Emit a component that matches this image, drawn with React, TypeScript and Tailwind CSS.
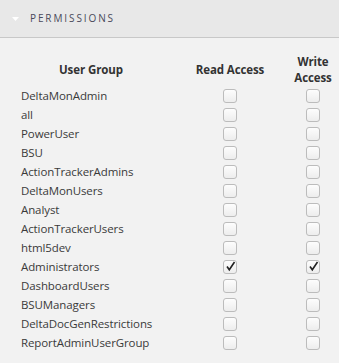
const groups = [
  { name: "DeltaMonAdmin", read: false, write: false },
  { name: "all", read: false, write: false },
  { name: "PowerUser", read: false, write: false },
  { name: "BSU", read: false, write: false },
  { name: "ActionTrackerAdmins", read: false, write: false },
  { name: "DeltaMonUsers", read: false, write: false },
  { name: "Analyst", read: false, write: false },
  { name: "ActionTrackerUsers", read: false, write: false },
  { name: "html5dev", read: false, write: false },
  { name: "Administrators", read: true, write: true },
  { name: "DashboardUsers", read: false, write: false },
  { name: "BSUManagers", read: false, write: false },
  { name: "DeltaDocGenRestrictions", read: false, write: false },
  { name: "ReportAdminUserGroup", read: false, write: false },
];

function Box({ checked }: { checked: boolean }) {
  return (
    <div className="w-[14px] h-[14px] rounded-[3px] border border-[#bcbcbc] bg-gradient-to-b from-[#fdfdfd] to-[#ededed] flex items-center justify-center mx-auto">
      {checked && (
        <svg width="11" height="11" viewBox="0 0 11 11">
          <path d="M2 5.5 L4.3 8.8 L9.5 1" fill="none" stroke="#222" strokeWidth="1.6" />
        </svg>
      )}
    </div>
  );
}

export default function App() {
  return (
    <div className="w-[339px] h-[363px] bg-[#f2f2f2] font-['Open_Sans',sans-serif] text-[#333] overflow-hidden">
      {/* Panel header */}
      <div className="h-[38px] bg-[#e8e8e8] border-b border-[#c8c8c8] flex items-center pl-[12px]">
        <svg width="7" height="5" viewBox="0 0 7 5" className="mt-[1px]">
          <path d="M0 0 L7 0 L3.5 4 Z" fill="#fff" />
        </svg>
        <span className="ml-[11px] text-[10px] tracking-[0.19em] text-[#4a4a5a]">PERMISSIONS</span>
      </div>

      <table className="ml-[12px] mt-[16px] border-collapse text-[11.5px] tracking-[-0.1px]">
        <thead>
          <tr className="align-middle">
            <th className="w-[158px] font-bold text-center leading-[16px]">User Group</th>
            <th className="w-[120px] font-bold text-center leading-[16px]">Read Access</th>
            <th className="w-[46px] font-bold text-center leading-[16px]">Write Access</th>
          </tr>
        </thead>
        <tbody>
          {groups.map((g) => (
            <tr key={g.name} className="h-[19px]">
              <td className="pl-[9px] text-left leading-[19px] font-normal text-[#3a3a3a]">{g.name}</td>
              <td><Box checked={g.read} /></td>
              <td><Box checked={g.write} /></td>
            </tr>
          ))}
        </tbody>
      </table>
    </div>
  );
}
